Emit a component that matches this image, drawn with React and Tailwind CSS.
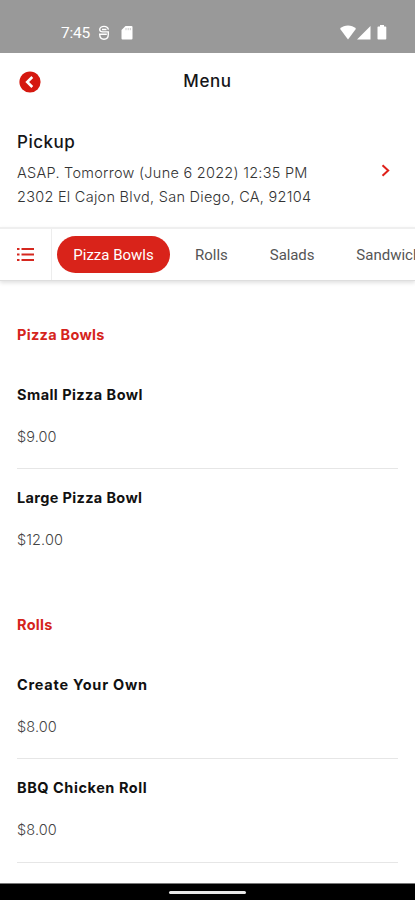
const tabs = [
  { name: 'Rolls', className: 'ml-[25px]' },
  { name: 'Salads', className: 'ml-[42px] tracking-[-0.1px]' },
  { name: 'Sandwiches', className: 'ml-[42px]' },
];

const sections = [
  {
    title: 'Pizza Bowls',
    items: [
      { name: 'Small Pizza Bowl', price: '$9.00', tracking: 'tracking-[0.45px]' },
      { name: 'Large Pizza Bowl', price: '$12.00', tracking: 'tracking-[0.35px]' },
    ],
  },
  {
    title: 'Rolls',
    items: [
      { name: 'Create Your Own', price: '$8.00', tracking: 'tracking-[0.75px]' },
      { name: 'BBQ Chicken Roll', price: '$8.00', tracking: 'tracking-[0.55px]' },
    ],
  },
];

function StatusBar() {
  return (
    <div className="flex h-[53px] shrink-0 items-start bg-[#999999] pt-[25px] pl-[61px] pr-[28px] text-white">
      <span className="font-['Roboto',sans-serif] text-[15.5px] leading-4 tracking-[-0.2px]">7:45</span>
      <svg className="ml-[8px]" width="12" height="16" viewBox="0 0 12 16" fill="none" stroke="white" strokeWidth="1.4">
        <path d="M10.400 4.600C10 2.600 8.300 1.400 6 1.400S1.700 2.800 1.700 4.600c0 1.600 1 2.300 3 2.300H11" />
        <path d="M1 9.300h7.800M1.700 9.300c0 3.200 1.600 5 4.300 5s4.300-1.800 4.300-5V7M4 4.500h4.500" />
      </svg>
      <svg className="ml-[11px]" width="12" height="16" viewBox="0 0 12 16">
        <path d="M4.500 1H10.500A1 1 0 0 1 11.500 2V13.500A1 1 0 0 1 10.500 14.500H1.500A1 1 0 0 1 .5 13.500V5Z" fill="white" />
        <path d="M5 3v2.200M7.200 3v2.200M9.300 3v2.200" stroke="#bbbbbb" strokeWidth="0.8" />
      </svg>
      <div className="ml-auto flex">
        <svg width="16" height="15" viewBox="0 0 16 15">
          <path d="M0 3.800C4.500-.5 11.500-.5 16 3.800L8 14.500Z" fill="white" />
        </svg>
        <svg className="ml-[1px]" width="14" height="15" viewBox="0 0 14 15">
          <path d="M13.500 1V14.500H0Z" fill="white" />
        </svg>
        <svg className="ml-[6px]" width="10" height="15" viewBox="0 0 10 15">
          <path d="M3 0H7V1.500H8.500A.8.8 0 0 1 9.300 2.300V13.700A.8.8 0 0 1 8.500 14.500H1.300A.8.8 0 0 1 .5 13.700V2.300A.8.8 0 0 1 1.300 1.500H3Z" fill="white" />
        </svg>
      </div>
    </div>
  );
}

function Header() {
  return (
    <header className="grid h-[57px] shrink-0 grid-cols-[1fr_auto_1fr] items-center px-[19px]">
      <button aria-label="Back" className="justify-self-start">
        <svg width="22" height="22" viewBox="0 0 22 22">
          <circle cx="11" cy="11" r="10.600" fill="#d5180f" />
          <path d="M13.300 6L8.200 11L13.300 16" fill="none" stroke="white" strokeWidth="2.600" />
        </svg>
      </button>
      <h1 className="-mt-[2px] text-[17px] leading-6 font-medium tracking-[0.6px] text-[#151518]">Menu</h1>
    </header>
  );
}

function Pickup() {
  return (
    <div className="flex h-[117px] shrink-0 justify-between pt-[20px] pl-[17px] pr-[24px]">
      <div className="whitespace-nowrap">
        <h2 className="text-[17px] leading-6 font-medium tracking-[0.5px] text-[#151518]">Pickup</h2>
        <p className="mt-[7px] text-[14.5px] leading-6 font-light tracking-[0.27px] text-[#333333]">
          ASAP. Tomorrow (June 6 2022) 12:35 PM
        </p>
        <p className="text-[14.5px] leading-6 font-light tracking-[0.27px] text-[#333333]">
          2302 El Cajon Blvd, San Diego, CA, 92104
        </p>
      </div>
      <svg className="mt-[34px]" width="10" height="13" viewBox="0 0 10 13" fill="none">
        <path d="M1.500 1.200L7.200 6.500L1.500 11.800" stroke="#df2019" strokeWidth="2" />
      </svg>
    </div>
  );
}

function Tabs() {
  return (
    <nav className="flex h-[54px] shrink-0 items-center overflow-hidden border-t-2 border-b border-t-[#efefef] border-b-[#dedede] font-['Roboto',sans-serif] text-[15px] whitespace-nowrap text-[#555555] shadow-[0_2px_4px_rgba(0,0,0,0.12)]">
      <button aria-label="Categories" className="flex h-full w-[52px] shrink-0 items-center border-r border-[#ededed] pl-[17px]">
        <svg width="17" height="15" viewBox="0 0 17 15" stroke="#d5281f" strokeWidth="1.800">
          <path d="M0 2H2.500M4.500 2H17M0 7.500H2.500M4.500 7.500H17M0 13H2.500M4.500 13H17" />
        </svg>
      </button>
      <button className="ml-[5px] h-[37px] w-[113px] shrink-0 rounded-full bg-[#d9231a] pt-px text-white">
        Pizza Bowls
      </button>
      {tabs.map((tab) => (
        <button key={tab.name} className={`pt-px ${tab.className}`}>
          {tab.name}
        </button>
      ))}
    </nav>
  );
}

function MenuSection({ title, items }) {
  return (
    <section className="px-[17px]">
      <h2 className="pt-[42px] pb-[21px] text-[14.5px] leading-5 font-bold tracking-[0.3px] text-[#d5241c]">{title}</h2>
      {items.map((item, i) => (
        <div
          key={item.name}
          className={`border-b pt-[19px] pb-[21px] last:pb-[22px] ${
            title === 'Pizza Bowls' && i === items.length - 1 ? 'border-transparent' : 'border-[#e6e6e6]'
          }`}
        >
          <h3 className={`text-[14.5px] leading-5 font-bold text-[#111111] ${item.tracking}`}>{item.name}</h3>
          <p className="mt-[22px] text-[14.5px] leading-5 font-light tracking-[0.1px] text-[#444444]">{item.price}</p>
        </div>
      ))}
    </section>
  );
}

export default function App() {
  return (
    <div className="flex h-[900px] w-[415px] flex-col overflow-hidden bg-white font-['Inter',sans-serif]">
      <StatusBar />
      <Header />
      <Pickup />
      <Tabs />
      <main className="min-h-0 flex-1 overflow-hidden pt-[2px]">
        {sections.map((section) => (
          <MenuSection key={section.title} title={section.title} items={section.items} />
        ))}
      </main>
      <footer className="flex h-[17px] shrink-0 justify-center border-t border-[#777777] bg-black pt-[7px]">
        <div className="h-[3px] w-[77px] rounded-full bg-[#e8e8e8]" />
      </footer>
    </div>
  );
}
